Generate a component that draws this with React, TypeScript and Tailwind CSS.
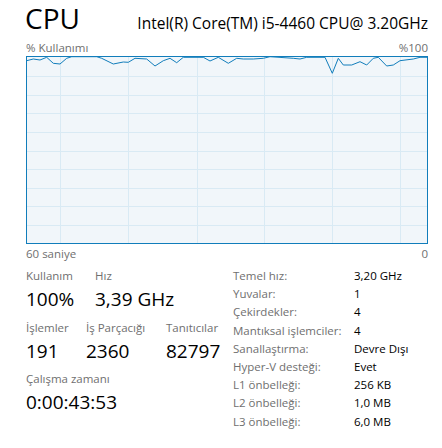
import React from "react";

const pts: [number, number][] = [
  [0.7, 4.7], [7.3, 3], [14, 4], [20.7, 1.3], [27.3, 7.3], [34, 8], [40.7, 2.3], [45.7, 0.7],
  [70.7, 0.7], [75.7, 2.3], [87.3, 8], [97.3, 6], [102.3, 6.3], [109, 2.3], [120.7, 3],
  [129, 10], [137.3, 4.7], [144, 2.3], [150.7, 6.7], [157.3, 1.3], [177.3, 1.3], [184, 5],
  [192.3, 1.3], [202.3, 7.3], [210.7, 2.3], [217.3, 3], [227.3, 3], [237.3, 2.3], [244, 0.7],
  [267.3, 2.3], [274, 3], [280.7, 1.3], [299, 1.3], [306.3, 17.3], [312.3, 2.3], [317.3, 9],
  [325.7, 9], [334, 5.7], [340.7, 9], [347.3, 2.3], [352.3, 1.3], [360.7, 10], [367.3, 9],
  [374, 4.7], [387.3, 3], [394, 1.3], [401, 1.3],
];

const vLines = [34, 102, 171, 238, 306, 374];
const hLines = [20, 39, 57, 76, 95, 113, 132, 150, 169];

const specs: [string, string][] = [
  ["Temel hız:", "3,20 GHz"],
  ["Yuvalar:", "1"],
  ["Çekirdekler:", "4"],
  ["Mantıksal işlemciler:", "4"],
  ["Sanallaştırma:", "Devre Dışı"],
  ["Hyper-V desteği:", "Evet"],
  ["L1 önbelleği:", "256 KB"],
  ["L2 önbelleği:", "1,0 MB"],
  ["L3 önbelleği:", "6,0 MB"],
];

function Stat({ label, value, w }: { label: string; value: string; w: string }) {
  return (
    <div className={`flex flex-col ${w}`}>
      <div className="text-[11.5px] leading-[16px] text-[#6f6f6f]">{label}</div>
      <div className="mt-[2px] text-[19px] leading-[26px] text-black">{value}</div>
    </div>
  );
}

export default function App() {
  return (
    <div
      className="w-[442px] h-[448px] bg-white pl-[26px] pr-[14px] text-black"
      style={{ fontFamily: '"Open Sans", "Noto Sans", sans-serif' }}
    >
      <div className="flex justify-between items-end h-[36px]">
        <div className="text-[28px] leading-[36px] -ml-[1px]">CPU</div>
        <div className="text-[15.5px] leading-[20px] mb-[3px]">Intel(R) Core(TM) i5-4460 CPU@ 3.20GHz</div>
      </div>
      <div className="flex justify-between text-[11.5px] leading-[16px] text-[#6f6f6f] mt-[4px]">
        <span>% Kullanımı</span>
        <span>%100</span>
      </div>
      <div className="w-full h-[188px]">
        <svg width="402" height="188" viewBox="0 0 402 188" className="block">
          <rect x="0.5" y="0.5" width="401" height="187" fill="#f1f6fa" stroke="#117dbb" />
          {vLines.map((x) => (
            <line key={x} x1={x + 0.5} y1={1} x2={x + 0.5} y2={187} stroke="#d9eaf4" />
          ))}
          {hLines.map((y) => (
            <line key={y} x1={1} y1={y + 0.5} x2={401} y2={y + 0.5} stroke="#d9eaf4" />
          ))}
          <polyline
            points={pts.map((p) => p.join(",")).join(" ")}
            fill="none"
            stroke="#117dbb"
            strokeWidth="1"
          />
          <rect x="0.5" y="0.5" width="401" height="187" fill="none" stroke="#117dbb" />
        </svg>
      </div>
      <div className="flex justify-between text-[11.5px] leading-[16px] text-[#6f6f6f] mt-[2px]">
        <span>60 saniye</span>
        <span>0</span>
      </div>
      <div className="flex mt-[6px]">
        <div className="w-[207px] flex flex-col">
          <div className="flex">
            <Stat label="Kullanım" value="100%" w="w-[69px]" />
            <Stat label="Hız" value="3,39 GHz" w="w-[100px]" />
          </div>
          <div className="flex mt-[8px]">
            <Stat label="İşlemler" value="191" w="w-[60px]" />
            <Stat label="İş Parçacığı" value="2360" w="w-[80px]" />
            <Stat label="Tanıtıcılar" value="82797" w="w-[60px]" />
          </div>
          <div className="flex mt-[7px]">
            <Stat label="Çalışma zamanı" value="0:00:43:53" w="w-[150px]" />
          </div>
        </div>
        <div className="flex flex-col -mt-[1px]">
          {specs.map(([k, v]) => (
            <div key={k} className="flex text-[11.5px] leading-[18.2px]">
              <div className="w-[121px] text-[#6f6f6f]">{k}</div>
              <div className="text-black">{v}</div>
            </div>
          ))}
        </div>
      </div>
    </div>
  );
}
